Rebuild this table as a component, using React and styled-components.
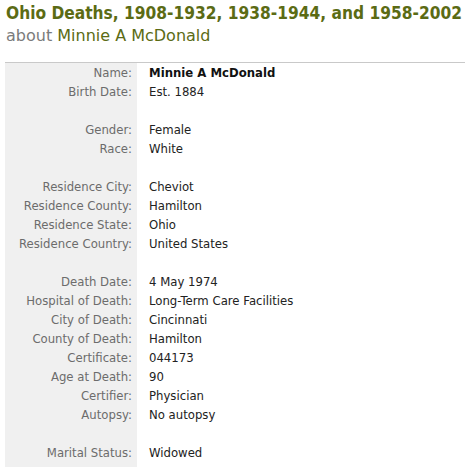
import React from "react";
import styled, { createGlobalStyle } from "styled-components";

const GlobalStyle = createGlobalStyle`
  html, body {
    margin: 0;
    padding: 0;
    background: #ffffff;
  }
  body {
    font-family: "DejaVu Sans", Verdana, sans-serif;
  }
`;

const rows = [
  ["Name:", "Minnie A McDonald", true],
  ["Birth Date:", "Est. 1884"],
  null,
  ["Gender:", "Female"],
  ["Race:", "White"],
  null,
  ["Residence City:", "Cheviot"],
  ["Residence County:", "Hamilton"],
  ["Residence State:", "Ohio"],
  ["Residence Country:", "United States"],
  null,
  ["Death Date:", "4 May 1974"],
  ["Hospital of Death:", "Long-Term Care Facilities"],
  ["City of Death:", "Cincinnati"],
  ["County of Death:", "Hamilton"],
  ["Certificate:", "044173"],
  ["Age at Death:", "90"],
  ["Certifier:", "Physician"],
  ["Autopsy:", "No autopsy"],
  null,
  ["Marital Status:", "Widowed"],
];

function App() {
  return (
    <>
      <GlobalStyle />
      <Page>
        <Title>Ohio Deaths, 1908-1932, 1938-1944, and 1958-2002</Title>
        <Subtitle>
          about <Person>Minnie A McDonald</Person>
        </Subtitle>
        <Record>
          {rows.map((r, i) =>
            r ? (
              <React.Fragment key={i}>
                <Label>{r[0]}</Label>
                <Value $bold={r[2]}>{r[1]}</Value>
              </React.Fragment>
            ) : (
              <React.Fragment key={i}>
                <Label />
                <Value />
              </React.Fragment>
            )
          )}
        </Record>
      </Page>
    </>
  );
}

export default App;

const Page = styled.div`
  width: 476px;
  height: 473px;
  padding: 3px 11px 0 5px;
  box-sizing: border-box;
`;

const Title = styled.h1`
  margin: 0 0 0 1px;
  font-family: "DejaVu Sans Condensed", "DejaVu Sans", sans-serif;
  font-size: 17.2px;
  line-height: 20px;
  font-weight: bold;
  color: #5b6b14;
  white-space: nowrap;
`;

const Subtitle = styled.div`
  margin: 3px 0 0 1px;
  font-size: 16px;
  line-height: 20px;
  color: #7b7b7b;
`;

const Person = styled.span`
  color: #5b6b14;
`;

const Record = styled.div`
  margin-top: 16px;
  border-top: 1px solid #c9c9c9;
  display: grid;
  grid-template-columns: 132px 1fr;
  grid-auto-rows: 19px;
  padding-top: 1px;
  padding-bottom: 4px;
  background: linear-gradient(to right, #f0f0f0 132px, #ffffff 132px);
  font-size: 11.7px;
`;

const Label = styled.div`
  text-align: right;
  padding-right: 5px;
  color: #6c6c6c;
  line-height: 19px;
  white-space: nowrap;
`;

const Value = styled.div`
  padding-left: 12px;
  color: ${({ $bold }) => ($bold ? "#111111" : "#222222")};
  font-weight: ${({ $bold }) => ($bold ? "bold" : "normal")};
  line-height: 19px;
  white-space: nowrap;
`;
